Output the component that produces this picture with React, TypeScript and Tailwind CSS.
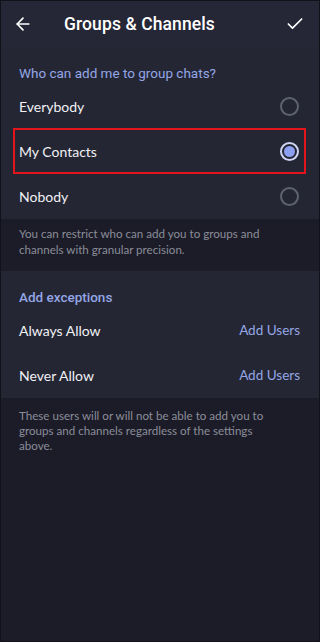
import { ArrowLeft, Check } from 'lucide-react';

function Radio({ checked }: { checked?: boolean }) {
  if (checked) {
    return (
      <div className="w-[19px] h-[19px] rounded-full border-2 border-[#cfd6f5] flex items-center justify-center">
        <div className="w-[11px] h-[11px] rounded-full bg-[#8c9ff0]" />
      </div>
    );
  }
  return <div className="w-[19px] h-[19px] rounded-full border-2 border-[#5f6270]" />;
}

const OPTIONS = [
  { label: 'Everybody', checked: false },
  { label: 'My Contacts', checked: true },
  { label: 'Nobody', checked: false },
];

export default function App() {
  return (
    <div className="w-[320px] h-[642px] bg-[#1b1c28] border border-[#111219] flex flex-col font-['Roboto',sans-serif] overflow-hidden">
      {/* Header */}
      <div className="h-[46px] bg-[#252736] flex items-center pl-[12px] pr-[14px] shrink-0">
        <ArrowLeft className="w-[20px] h-[20px] text-white" strokeWidth={2} />
        <span className="ml-[31px] text-white text-[17.5px] font-medium tracking-[0.1px]">Groups &amp; Channels</span>
        <Check className="ml-auto w-[20px] h-[20px] text-white" strokeWidth={2} />
      </div>

      {/* Section 1 */}
      <div className="bg-[#242634] pt-[17px]">
        <div className="px-[18px] text-[13.5px] text-[#94a6e6] leading-[18px] pb-[2px]">Who can add me to group chats?</div>
        {OPTIONS.map((o) => (
          <div key={o.label} className="relative h-[45px] flex items-center justify-between pl-[18px] pr-[20px]">
            {o.checked && (
              <div className="absolute left-[12px] right-[13px] top-[-1px] bottom-0 border-2 border-[#e3141c]" />
            )}
            <span className="text-[14px] text-[#f1f1f4] font-['Lato',sans-serif]">{o.label}</span>
            <Radio checked={o.checked} />
          </div>
        ))}
      </div>

      {/* Description 1 */}
      <div className="pl-[18px] pr-[40px] pt-[7px] pb-[13px] text-[11.6px] leading-[16px] text-[#8b8d98] font-['Lato',sans-serif]">
        You can restrict who can add you to groups and channels with granular precision.
      </div>

      {/* Section 2 */}
      <div className="bg-[#242634] pt-[17px]">
        <div className="px-[18px] text-[13.5px] text-[#94a6e6] font-medium leading-[18px] pb-[2px]">Add exceptions</div>
        {['Always Allow', 'Never Allow'].map((l) => (
          <div key={l} className="h-[45px] flex items-center justify-between pl-[18px] pr-[19px]">
            <span className="text-[14px] text-[#f1f1f4] font-['Lato',sans-serif]">{l}</span>
            <span className="text-[13.5px] text-[#95a6e4] font-['Lato',sans-serif]">Add Users</span>
          </div>
        ))}
      </div>

      {/* Description 2 */}
      <div className="pl-[18px] pr-[40px] pt-[10px] text-[11.6px] leading-[15px] text-[#8b8d98] font-['Lato',sans-serif]">
        These users will or will not be able to add you to groups and channels regardless of the settings above.
      </div>
    </div>
  );
}
